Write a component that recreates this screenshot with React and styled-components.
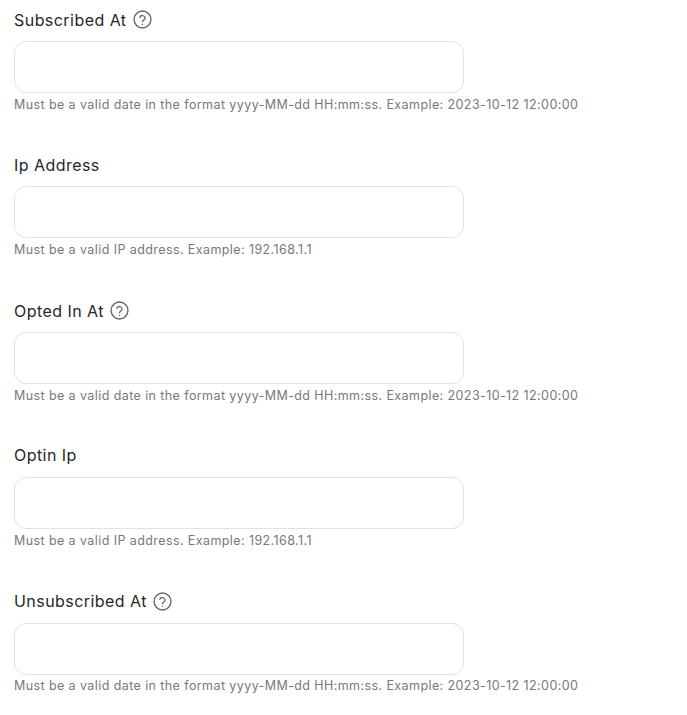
import { createGlobalStyle } from "styled-components";
import styled from "styled-components";

const GlobalStyle = createGlobalStyle`
  html, body {
    margin: 0;
    background: #fff;
    overflow: hidden;
  }
`;

const Form = styled.div`
  width: 687px;
  height: 715px;
  box-sizing: border-box;
  padding: 9px 0 0 14px;
  font-family: Inter, "Liberation Sans", sans-serif;
`;

const Field = styled.div`
  height: 145.4px;
`;

const Label = styled.div`
  display: flex;
  align-items: center;
  gap: 6.5px;
  box-sizing: border-box;
  height: 21.4px;
  padding: ${(p) => (p.$help ? "0.4px 0 0" : "0 0 0.8px")};
  font-size: 16px;
  font-weight: 400;
  letter-spacing: 0.45px;
  color: #27272a;
`;

const Input = styled.input`
  display: block;
  box-sizing: border-box;
  width: 450px;
  height: 52px;
  margin-top: 10.6px;
  border: 1px solid #e2e2e6;
  border-radius: 12px;
  background: #fff;
  outline: none;
`;

const Hint = styled.div`
  margin-top: 3.8px;
  font-size: 12.5px;
  line-height: 16px;
  letter-spacing: 0.41px;
  color: #78787c;
`;

const HelpIcon = () => (
  <svg width="19" height="19" viewBox="0 0 18 18" fill="none" stroke="#66666a" strokeWidth="1.3" strokeLinecap="round" strokeLinejoin="round">
    <circle cx="9" cy="9" r="8" />
    <path d="M6.5 6.9a2.6 2.6 0 0 1 5 .7c0 1.7-2.5 2.1-2.5 3.6" />
    <path d="M9 13.6v.05" />
  </svg>
);

const dateHint = "Must be a valid date in the format yyyy-MM-dd HH:mm:ss. Example: 2023-10-12 12:00:00";
const ipHint = "Must be a valid IP address. Example: 192.168.1.1";

const fields = [
  { label: "Subscribed At", help: true, hint: dateHint },
  { label: "Ip Address", hint: ipHint },
  { label: "Opted In At", help: true, hint: dateHint },
  { label: "Optin Ip", hint: ipHint },
  { label: "Unsubscribed At", help: true, hint: dateHint },
];

export default function App() {
  return (
    <Form>
      <GlobalStyle />
      {fields.map((f) => (
        <Field key={f.label}>
          <Label $help={f.help}>
            {f.label}
            {f.help && <HelpIcon />}
          </Label>
          <Input type="text" />
          <Hint>{f.hint}</Hint>
        </Field>
      ))}
    </Form>
  );
}
